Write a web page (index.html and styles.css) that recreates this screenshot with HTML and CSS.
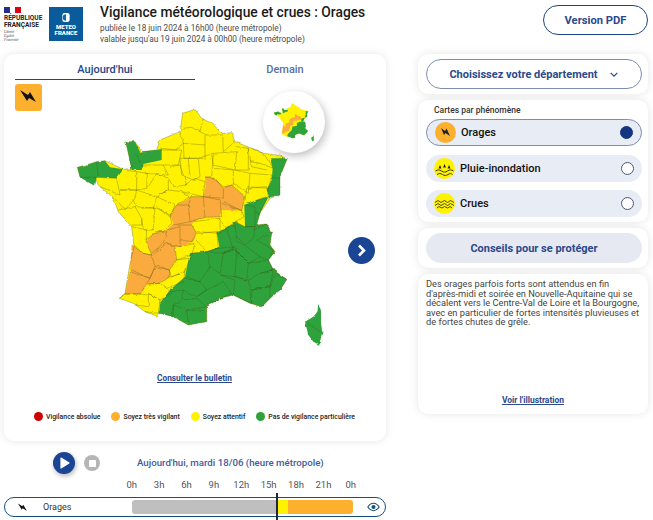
FILE: index.html
```html
<!DOCTYPE html>
<html lang="fr">
<head>
    <meta charset="UTF-8">
    <meta name="viewport" content="width=device-width, initial-scale=1.0">
    <title>Vigilance météorologique et crues</title>
    <link rel="stylesheet" href="styles.css">
</head>
<body>
    <header class="header">
        <div class="rf-logo">
            <div class="rf-flag"><span class="blue"></span><span class="white"></span><span class="red"></span></div>
            <div class="rf-name">RÉPUBLIQUE<br>FRANÇAISE</div>
            <div class="rf-motto">Liberté<br>Égalité<br>Fraternité</div>
        </div>
        <div class="mf-logo">
            <svg class="mf-mark" viewBox="0 0 10 12">
                <rect x="1" y="1" width="8" height="10" rx="2.5" fill="#fff"/>
                <path d="M5 2.5a3.5 3.5 0 0 0 0 7z" fill="#0a6cb0"/>
            </svg>
            <div class="mf-name">METEO<br>FRANCE</div>
        </div>
        <div class="title-block">
            <h1 class="title">Vigilance météorologique et crues : Orages</h1>
            <div class="subtitle">publiée le 18 juin 2024 à 16h00 (heure métropole)</div>
            <div class="subtitle">valable jusqu'au 19 juin 2024 à 00h00 (heure métropole)</div>
        </div>
        <button class="pdf-button">Version PDF</button>
    </header>

    <main class="layout">
        <section class="left">
            <div class="card map-card">
                <div class="tabs">
                    <div class="tab active">Aujourd'hui</div>
                    <div class="tab">Demain</div>
                </div>
                <div class="map-area">
                    <div class="phenomenon-badge">
                        <svg viewBox="0 0 27 27"><path d="M5 6l8 5 2-3 6 10-7-4-2 3z" fill="#111"/></svg>
                    </div>
                    <svg class="france" viewBox="0 0 840 810">
                        <defs>
                            <filter id="rough" filterUnits="userSpaceOnUse" x="0" y="0" width="840" height="810">
                                <feTurbulence type="fractalNoise" baseFrequency="0.055" numOctaves="2" seed="4"/>
                                <feDisplacementMap in="SourceGraphic" scale="8" xChannelSelector="R" yChannelSelector="G"/>
                            </filter>
                        </defs>
                        <g filter="url(#rough)">
                            <g id="fr-fills">
                                <path fill="#fff100" d="M368 70L405 58L425 85L455 100L488 130L515 128L525 155L575 175L610 190L650 195L682 205L660 260L660 315L630 325L600 370L590 405L620 402L635 430L630 465L645 485L625 510L640 540L680 568L660 600L630 625L605 650L570 640L520 615L480 625L440 650L440 695L385 705L340 680L300 670L290 678L255 665L220 640L178 625L195 610L210 520L222 470L215 410L175 365L160 325L115 285L105 262L60 262L52 232L110 215L135 212L190 238L215 235L197 155L225 155L245 185L290 180L300 150L360 125Z"/>
                                <path fill="#2fa33b" d="M52 232L80 225L110 215L135 212L150 232L190 238L170 265L110 262L105 288L90 280L60 262Z"/>
                                <path fill="#2fa33b" d="M197 155L225 155L240 185L290 180L305 178L305 210L250 222L245 240L215 240L205 190Z"/>
                                <path fill="#2fa33b" d="M630 205L682 205L660 260L660 315L630 322L620 300L635 270L638 235Z"/>
                                <path fill="#2fa33b" d="M553 345L590 330L625 320L600 370L590 405L620 402L635 430L630 465L645 485L625 510L640 540L680 568L660 600L630 625L605 650L570 640L520 615L480 625L440 650L440 695L385 705L340 680L298 670L300 640L330 600L375 560L390 490L440 485L478 470L470 425L500 415L525 395L555 410Z"/>
                                <path fill="#2fa33b" d="M775 645L783 660L783 700L787 725L778 765L760 755L745 735L735 695L760 680L772 665Z"/>
                                <path fill="#fbab3c" d="M435 260L465 265L490 295L515 285L555 320L545 362L485 360L480 380L435 382L400 395L395 405L410 430L400 455L360 472L345 470L350 510L328 540L330 560L300 580L265 582L240 612L195 612L210 540L215 465L250 490L275 495L258 455L280 430L320 420L340 400L330 375L350 345L395 320L430 320L437 290Z"/>
                            </g>
                            <path class="dept-lines" d="M368 115L395 112L420 125L430 85M420 125L440 135L488 135M360 125L370 160L345 180L305 175M370 160L435 165M435 135L435 210M370 160L372 205L430 205M488 135L490 185L525 155M460 190L530 185L525 240L460 225L455 195M530 170L565 175L565 240L525 240M565 175L575 230L620 240M575 175L610 190L640 235L600 220L570 215M570 250L635 255L625 295L560 290M525 240L570 250L565 310L520 280M460 235L520 240L520 285L490 290L460 265M360 205L415 205L420 260L400 270L365 255L360 205M385 205L390 260M415 205L460 190L455 260L435 262M300 180L365 180L355 225L310 225M330 230L360 225L380 285L340 290L325 265M245 225L310 225L325 255L255 250M230 245L262 250L260 295L230 300M262 295L290 250L325 265L325 300L295 315M375 285L405 265L435 275L430 320L365 305M290 320L325 300L365 305L390 320L350 345M190 240L230 245L230 300L180 300M105 262L170 265L180 315L120 290M180 300L230 300L225 325L195 360L165 325M230 300L290 320L280 355L230 350L218 328M290 320L345 345L330 380L290 350M175 360L225 350L245 385L245 405L215 405M245 355L285 352L280 420L250 420L245 385M285 352L330 375L335 400L310 425L285 425M215 410L260 420L258 455L275 495L250 490L222 465M258 450L285 430L320 425L310 460L275 490M320 420L360 410L360 470L318 458M350 405L395 405L410 430L395 455L360 450M330 375L350 345L385 345L390 395L340 405M385 345L395 320L430 320L435 382L390 395M430 320L480 330L485 380L435 382M435 260L465 265L490 295L490 325L430 320M490 295L515 285L555 320L545 362L490 335M485 340L545 362L552 380L525 395L500 415L475 385M400 395L480 385L480 430L410 425M410 430L470 425L475 475L440 485L408 450M360 470L405 460L395 495L350 510M280 495L318 460L345 470L350 510L328 540L290 525M215 465L250 490L275 495L285 530L270 565L215 540M210 545L270 565L240 612L195 612M270 565L285 530L328 540L330 560L300 580L265 582M350 510L390 505L375 545L335 560L328 540M330 562L375 545L370 575L320 595M265 582L300 580L320 595L335 610L300 630L265 610M178 625L195 612L240 612L265 615L265 650L225 645M265 610L300 630L295 670L255 665M390 490L440 485L450 530L420 575L380 560M440 485L490 490L480 550L445 530M490 490L530 475L525 560L480 555M375 565L420 575L440 600L410 620L370 600M410 620L440 600L490 575L515 610L480 625L440 640M480 555L525 570L520 615M365 630L410 625L440 650L380 660M385 700L380 660L440 665M340 680L340 645L380 660M298 640L330 605L370 600L365 630L340 645L335 680M520 560L565 570L575 640L520 615M575 640L575 600L630 590L630 625L605 650M630 590L645 550L680 568L660 600M565 570L600 550L640 540L630 590L575 600M525 480L565 520L560 570L525 560M565 520L625 510L640 540L600 550M525 450L560 470L600 500L565 520L525 480M590 450L640 480L625 510L600 500M580 420L620 402L635 430L590 450M525 395L555 410L585 410L580 445L555 465L530 440M500 415L525 400L530 450M478 430L500 415L520 480L490 490M440 485L475 475L525 470L490 490M553 345L585 350L585 410L555 410M585 335L625 320L595 375L585 355M555 335L560 295L620 290L625 318L590 330M745 700L780 725M110 215L115 262M230 190L240 220M635 262L660 265M368 70L405 58L425 85L455 100L488 130L515 128L525 155L575 175L610 190L650 195L682 205L660 260L660 315L630 325L600 370L590 405L620 402L635 430L630 465L645 485L625 510L640 540L680 568L660 600L630 625L605 650L570 640L520 615L480 625L440 650L440 695L385 705L340 680L300 670L290 678L255 665L220 640L178 625L195 610L210 520L222 470L215 410L175 365L160 325L115 285L105 262L60 262L52 232L110 215L135 212L190 238L215 235L197 155L225 155L245 185L290 180L300 150L360 125Z"/>
                        </g>
                    </svg>
                    <div class="inset">
                        <svg viewBox="0 0 840 810"><use href="#fr-fills"/></svg>
                    </div>
                    <button class="next-button">
                        <svg viewBox="0 0 27 27"><path d="M11 8.500l5 5-5 5" fill="none" stroke="#fff" stroke-width="2.600"/></svg>
                    </button>
                </div>
                <a class="bulletin-link">Consulter le bulletin</a>
                <div class="legend">
                    <div class="legend-item"><span class="dot red"></span>Vigilance absolue</div>
                    <div class="legend-item"><span class="dot orange"></span>Soyez très vigilant</div>
                    <div class="legend-item"><span class="dot yellow"></span>Soyez attentif</div>
                    <div class="legend-item"><span class="dot green"></span>Pas de vigilance particulière</div>
                </div>
            </div>

            <div class="player">
                <button class="play-button">
                    <svg viewBox="0 0 22 22"><path d="M8 6l8 5-8 5z" fill="#fff" stroke="#fff" stroke-width="1.200" stroke-linejoin="round"/></svg>
                </button>
                <button class="stop-button"><span></span></button>
                <div class="player-label">Aujourd'hui, mardi 18/06 (heure métropole)</div>
            </div>
            <div class="hours">
                <span>0h</span><span>3h</span><span>6h</span><span>9h</span><span>12h</span><span>15h</span><span>18h</span><span>21h</span><span>0h</span>
            </div>
            <div class="timeline">
                <svg class="timeline-icon" viewBox="0 0 27 27"><path d="M4 5l9 6 2-3 8 13-9-6-2 3z" fill="#111"/></svg>
                <span class="timeline-name">Orages</span>
                <div class="bar">
                    <span class="bar-past"></span><span class="bar-yellow"></span><span class="bar-orange"></span>
                </div>
                <svg class="eye" viewBox="0 0 16 12">
                    <path d="M1 6c2-3 4.500-4.500 7-4.500S13 3 15 6c-2 3-4.500 4.500-7 4.500S3 9 1 6z" fill="none" stroke="#14507a" stroke-width="1.300"/>
                    <circle cx="8" cy="6" r="2.500" fill="#14507a"/>
                </svg>
                <span class="cursor"></span>
            </div>
        </section>

        <aside class="right">
            <div class="card side-card">
                <button class="dept-button">Choisissez votre département
                    <svg viewBox="0 0 12 8"><path d="M2 2l4 4 4-4" fill="none" stroke="#2b4a8b" stroke-width="1.500"/></svg>
                </button>
            </div>
            <div class="card side-card phenomena">
                <div class="phenomena-title">Cartes par phénomène</div>
                <div class="phenomenon selected">
                    <span class="icon-circle orange">
                        <svg viewBox="0 0 21 21"><path d="M6 6l4 3 1.500-2.500L15 14l-4.500-3-1.500 2z" fill="#222"/></svg>
                    </span>
                    <span class="phenomenon-name">Orages</span>
                    <span class="radio checked"></span>
                </div>
                <div class="phenomenon">
                    <span class="icon-circle yellow">
                        <svg viewBox="0 0 21 21">
                            <path d="M6 7l-1.500 3.500h3zM10.500 6L9 9.500h3zM15 7l-1.500 3.500h3z" fill="#222"/>
                            <path d="M1.500 13c2.200-1.500 3.800-1.500 6 0s3.800 1.500 6 0 3.800-1.500 6 0M3 16.500c2-1.300 3.500-1.300 5.500 0s3.500 1.300 5.500 0 3-1.300 4.500 0" fill="none" stroke="#222" stroke-width=".9"/>
                        </svg>
                    </span>
                    <span class="phenomenon-name">Pluie-inondation</span>
                    <span class="radio"></span>
                </div>
                <div class="phenomenon">
                    <span class="icon-circle yellow">
                        <svg viewBox="0 0 21 21">
                            <path d="M1 9.500l3-2 3 2 3.500-2 3 2 3-2 3.500 2M1 12.500l3-2 3 2 3.500-2 3 2 3-2 3.500 2M3 15l2-1.500 3 1.500 2.500-1.500 3 1.500 2.500-1.500 2 1.500" fill="none" stroke="#222" stroke-width=".8"/>
                        </svg>
                    </span>
                    <span class="phenomenon-name">Crues</span>
                    <span class="radio"></span>
                </div>
            </div>
            <div class="card side-card">
                <button class="advice-button">Conseils pour se protéger</button>
            </div>
            <div class="card text-card">
                <p class="text-body">Des orages parfois forts sont attendus en fin d'après-midi et soirée en Nouvelle-Aquitaine qui se décalent vers le Centre-Val de Loire et la Bourgogne, avec en particulier de fortes intensités pluvieuses et de fortes chutes de grêle.</p>
                <a class="illustration-link">Voir l'illustration</a>
            </div>
        </aside>
    </main>
</body>
</html>
```

FILE: styles.css
```css
* {
    box-sizing: border-box;
}

body {
    font-family: Roboto, "Liberation Sans", sans-serif;
    width: 653px;
    height: 520px;
    margin: 0;
    overflow: hidden;
    background-color: #fff;
    color: #111;
}

button {
    font-family: inherit;
    cursor: pointer;
}

/* header */
.header {
    display: flex;
    align-items: flex-start;
    height: 54px;
    padding: 5px 5px 0 4px;
}

.rf-logo {
    width: 45px;
    padding-top: 2px;
}

.rf-flag {
    display: flex;
    width: 17px;
    height: 6px;
    margin-bottom: 2px;
}

.rf-flag span {
    flex: 1;
}

.rf-flag .blue {
    background-color: #21308f;
}

.rf-flag .white {
    background-color: #fff;
}

.rf-flag .red {
    background-color: #e1000f;
}

.rf-name {
    font-size: 6.500px;
    font-weight: 700;
    line-height: 6.500px;
    color: #222;
}

.rf-motto {
    margin-top: 2px;
    font-family: "Liberation Serif", serif;
    font-style: italic;
    font-size: 3.500px;
    line-height: 4px;
    color: #444;
}

.mf-logo {
    display: flex;
    flex-direction: column;
    align-items: center;
    width: 34px;
    height: 34px;
    margin-top: 2px;
    padding-top: 5px;
    background-color: #0a5b9c;
    color: #fff;
}

.mf-mark {
    width: 10px;
    height: 11px;
}

.mf-name {
    margin-top: 1px;
    font-size: 6px;
    font-weight: 900;
    line-height: 6px;
    text-align: center;
}

.title-block {
    flex: 1;
    margin-left: 17px;
}

.title {
    margin: 0 0 3px;
    font-size: 13.800px;
    font-weight: 500;
    line-height: 15px;
    color: #1a1a1a;
}

.subtitle {
    font-size: 8.250px;
    line-height: 11px;
    color: #4a4a4a;
}

.pdf-button {
    width: 105px;
    height: 30px;
    background-color: #fff;
    border: 1px solid #1f4487;
    border-radius: 15px;
    font-size: 11.200px;
    font-weight: 700;
    color: #2b4a8b;
}

/* page columns */
.layout {
    display: flex;
    padding-left: 4px;
}

.left {
    width: 382px;
}

.right {
    display: flex;
    flex-direction: column;
    gap: 6px;
    width: 230px;
    margin-left: 32px;
}

.card {
    background-color: #fff;
    border-radius: 10px;
    box-shadow: 0 0 8px rgba(0, 0, 0, 0.10);
}

/* map card */
.map-card {
    height: 387px;
    padding: 0 11px;
}

.tabs {
    display: flex;
    height: 26px;
}

.tab {
    width: 180px;
    padding-top: 9px;
    text-align: center;
    font-size: 11px;
    font-weight: 500;
    color: #56709f;
}

.tab.active {
    border-bottom: 1.500px solid #1f4487;
    color: #27468a;
}

.map-area {
    position: relative;
    height: 292px;
}

.phenomenon-badge {
    position: absolute;
    left: 0;
    top: 4px;
    width: 27px;
    height: 27px;
    background-color: #fdb02d;
    border-radius: 3px;
}

.phenomenon-badge svg {
    display: block;
}

.france {
    position: absolute;
    left: 45px;
    top: 10px;
    width: 280px;
    height: 270px;
}

.dept-lines {
    fill: none;
    stroke: #3d4a10;
    stroke-opacity: 0.7;
    stroke-width: 1.300;
    stroke-linejoin: round;
}

.inset {
    position: absolute;
    left: 248px;
    top: 11px;
    display: flex;
    align-items: center;
    justify-content: center;
    width: 62px;
    height: 62px;
    background-color: #fff;
    border-radius: 50%;
    box-shadow: 2px 3px 8px rgba(0, 0, 0, 0.25);
}

.inset svg {
    width: 46px;
    height: 44px;
}

.next-button {
    position: absolute;
    left: 333px;
    top: 157px;
    width: 27px;
    height: 27px;
    padding: 0;
    background-color: #1a4494;
    border: none;
    border-radius: 50%;
}

.next-button svg {
    display: block;
}

.bulletin-link {
    display: block;
    width: 155px;
    margin-left: 102px;
    text-align: center;
    font-size: 8.300px;
    font-weight: 700;
    line-height: 12px;
    text-decoration: underline;
    color: #2b4a8b;
}

.legend {
    display: flex;
    justify-content: center;
    gap: 11px;
    margin-top: 28px;
    padding-right: 1px;
}

.legend-item {
    display: flex;
    align-items: center;
    gap: 3px;
    font-size: 6.900px;
    font-weight: 500;
    color: #222;
}

.dot {
    width: 9px;
    height: 9px;
    border-radius: 50%;
}

.dot.red {
    background-color: #cc0000;
}

.dot.orange {
    background-color: #fdb02d;
}

.dot.yellow {
    background-color: #fff200;
}

.dot.green {
    background-color: #2fa33b;
}

/* player and timeline */
.player {
    display: flex;
    align-items: center;
    height: 22px;
    margin-top: 11px;
    padding-left: 49px;
}

.play-button {
    width: 22px;
    height: 22px;
    padding: 0;
    background-color: #1a4494;
    border: none;
    border-radius: 50%;
    box-shadow: 1px 2px 5px rgba(0, 0, 0, 0.3);
}

.play-button svg {
    display: block;
}

.stop-button {
    display: flex;
    align-items: center;
    justify-content: center;
    width: 16px;
    height: 16px;
    margin-left: 9px;
    padding: 0;
    background-color: #b5b5b5;
    border: none;
    border-radius: 50%;
}

.stop-button span {
    width: 7px;
    height: 7px;
    background-color: #fff;
    border-radius: 1px;
}

.player-label {
    margin-left: 37px;
    margin-bottom: 2px;
    font-size: 9.700px;
    font-weight: 500;
    color: #3f5c9a;
}

.hours {
    display: flex;
    height: 12px;
    margin-top: 5px;
    padding-left: 114px;
}

.hours span {
    width: 27.400px;
    text-align: center;
    font-size: 9.500px;
    line-height: 12px;
    color: #555;
}

.timeline {
    position: relative;
    display: flex;
    align-items: center;
    height: 20px;
    margin-top: 6px;
    border: 1.500px solid #14507a;
    border-radius: 10px;
}

.timeline-icon {
    width: 13px;
    height: 13px;
    margin-left: 11px;
}

.timeline-name {
    width: 89px;
    margin-left: 14px;
    font-size: 9px;
    color: #333;
}

.bar {
    display: flex;
    width: 221px;
    height: 14px;
    border-radius: 3px;
    overflow: hidden;
}

.bar-past {
    width: 146px;
    background-color: #bfbfbf;
}

.bar-yellow {
    width: 10px;
    background-color: #fff200;
}

.bar-orange {
    flex: 1;
    background-color: #fdb02d;
}

.eye {
    width: 13px;
    height: 10px;
    margin-left: 14px;
}

.cursor {
    position: absolute;
    left: 271px;
    top: -5px;
    width: 2px;
    height: 29px;
    background-color: #1c2a3a;
}

/* right column */
.side-card {
    padding: 5px 6px 5px 8px;
}

.dept-button {
    display: flex;
    align-items: center;
    justify-content: center;
    gap: 11px;
    width: 216px;
    height: 30px;
    background-color: #fff;
    border: 1px solid #7d8db3;
    border-radius: 15px;
    font-size: 11px;
    font-weight: 700;
    color: #2b4a8b;
}

.dept-button svg {
    width: 10px;
    height: 7px;
}

.phenomena {
    height: 122px;
    padding-top: 4px;
}

.phenomena-title {
    height: 15px;
    padding-left: 8px;
    font-size: 8.500px;
    font-weight: 500;
    line-height: 12px;
    color: #333;
}

.phenomenon {
    display: flex;
    align-items: center;
    width: 216px;
    height: 27px;
    margin-bottom: 8.500px;
    padding: 0 8px;
    background-color: #e8ecf5;
    border-radius: 14px;
}

.phenomenon.selected {
    border: 1px solid #7d8db3;
}

.icon-circle {
    display: block;
    width: 21px;
    height: 21px;
    border-radius: 50%;
}

.icon-circle svg {
    display: block;
}

.icon-circle.orange {
    background-color: #fdb02d;
}

.icon-circle.yellow {
    background-color: #fff200;
}

.phenomenon-name {
    flex: 1;
    margin-left: 5px;
    font-size: 11px;
    font-weight: 500;
    color: #111;
}

.radio {
    width: 13px;
    height: 13px;
    background-color: #fff;
    border: 1px solid #4a5a78;
    border-radius: 50%;
}

.radio.checked {
    background-color: #14357f;
    border-color: #14357f;
}

.advice-button {
    width: 216px;
    height: 30px;
    background-color: #e6e9f2;
    border: none;
    border-radius: 15px;
    font-size: 11px;
    font-weight: 700;
    color: #2b4a8b;
}

.text-card {
    display: flex;
    flex-direction: column;
    height: 140px;
    padding: 5px 8px 9px 8px;
}

.text-body {
    flex: 1;
    margin: 0;
    font-size: 9.250px;
    line-height: 9.600px;
    color: #444;
}

.illustration-link {
    text-align: center;
    font-size: 8.500px;
    font-weight: 700;
    text-decoration: underline;
    color: #2b4a8b;
}
```
